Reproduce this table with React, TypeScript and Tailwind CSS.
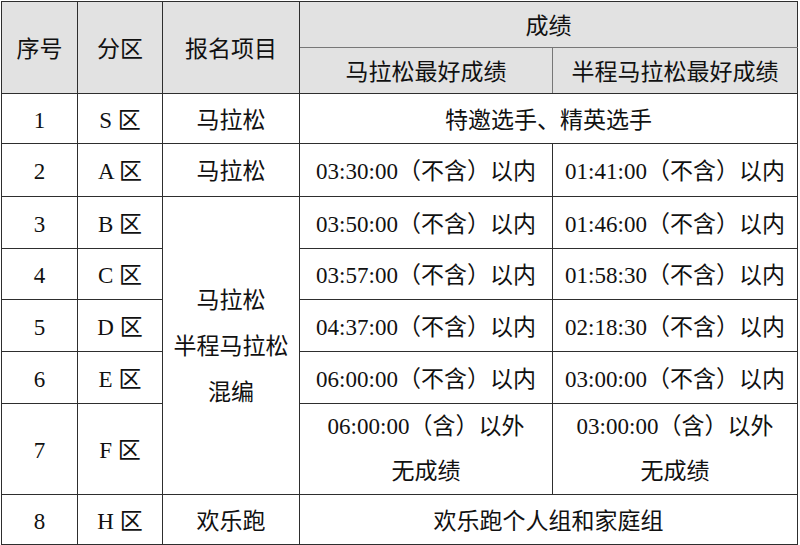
const rows = [
  { no: "1", zone: "S", full: "特邀选手、精英选手", h: "h-[50px]" },
  { no: "2", zone: "A", m: "03:30:00", hm: "01:41:00", h: "h-[53px]" },
  { no: "3", zone: "B", m: "03:50:00", hm: "01:46:00", h: "h-[52px]" },
  { no: "4", zone: "C", m: "03:57:00", hm: "01:58:30", h: "h-[51px]" },
  { no: "5", zone: "D", m: "04:37:00", hm: "02:18:30", h: "h-[52px]" },
  { no: "6", zone: "E", m: "06:00:00", hm: "03:00:00", h: "h-[52px]" },
];

const base = "border border-[#2e2e2e] text-center align-middle px-0 pb-0";
const cell = `${base} pt-[3px]`;

export default function App() {
  return (
    <div className="w-[800px] h-[545px] bg-white pt-px pl-px">
      <table
        className="w-[796px] table-fixed border-collapse text-[23px] text-[#111] leading-none"
        style={{ fontFamily: '"Liberation Serif", "Noto Sans CJK SC", serif' }}
      >
        <colgroup>
          <col className="w-[76px]" />
          <col className="w-[85px]" />
          <col className="w-[137px]" />
          <col className="w-[253px]" />
          <col className="w-[245px]" />
        </colgroup>
        <thead className="bg-[#e2e2e2]">
          <tr className="h-[46px]">
            <th rowSpan={2} className={`${cell} font-normal`}>序号</th>
            <th rowSpan={2} className={`${cell} font-normal`}>分区</th>
            <th rowSpan={2} className={`${cell} font-normal`}>报名项目</th>
            <th colSpan={2} className={`${cell} font-normal border-b-[#777]`}>成绩</th>
          </tr>
          <tr className="h-[46px]">
            <th className={`${cell} font-normal border-r-[#777]`}>马拉松最好成绩</th>
            <th className={`${cell} font-normal`}>半程马拉松最好成绩</th>
          </tr>
        </thead>
        <tbody>
          {rows.map((r) => (
            <tr key={r.no} className={r.h}>
              <td className={cell}>{r.no}</td>
              <td className={cell}>{r.zone} 区</td>
              {r.no === "1" || r.no === "2" ? (
                <td className={cell}>马拉松</td>
              ) : r.no === "3" ? (
                <td rowSpan={5} className={`${cell} leading-[46px]`}>
                  <div>马拉松</div>
                  <div>半程马拉松</div>
                  <div>混编</div>
                </td>
              ) : null}
              {r.full ? (
                <td colSpan={2} className={cell}>{r.full}</td>
              ) : (
                <>
                  <td className={cell}>{r.m}（不含）以内</td>
                  <td className={cell}>{r.hm}（不含）以内</td>
                </>
              )}
            </tr>
          ))}
          <tr className="h-[91px]">
            <td className={cell}>7</td>
            <td className={cell}>F 区</td>
            <td className={`${base} pt-0 leading-[45px]`}>
              <div>06:00:00（含）以外</div>
              <div>无成绩</div>
            </td>
            <td className={`${base} pt-0 leading-[45px]`}>
              <div>03:00:00（含）以外</div>
              <div>无成绩</div>
            </td>
          </tr>
          <tr className="h-[50px]">
            <td className={cell}>8</td>
            <td className={cell}>H 区</td>
            <td className={cell}>欢乐跑</td>
            <td colSpan={2} className={cell}>欢乐跑个人组和家庭组</td>
          </tr>
        </tbody>
      </table>
    </div>
  );
}
